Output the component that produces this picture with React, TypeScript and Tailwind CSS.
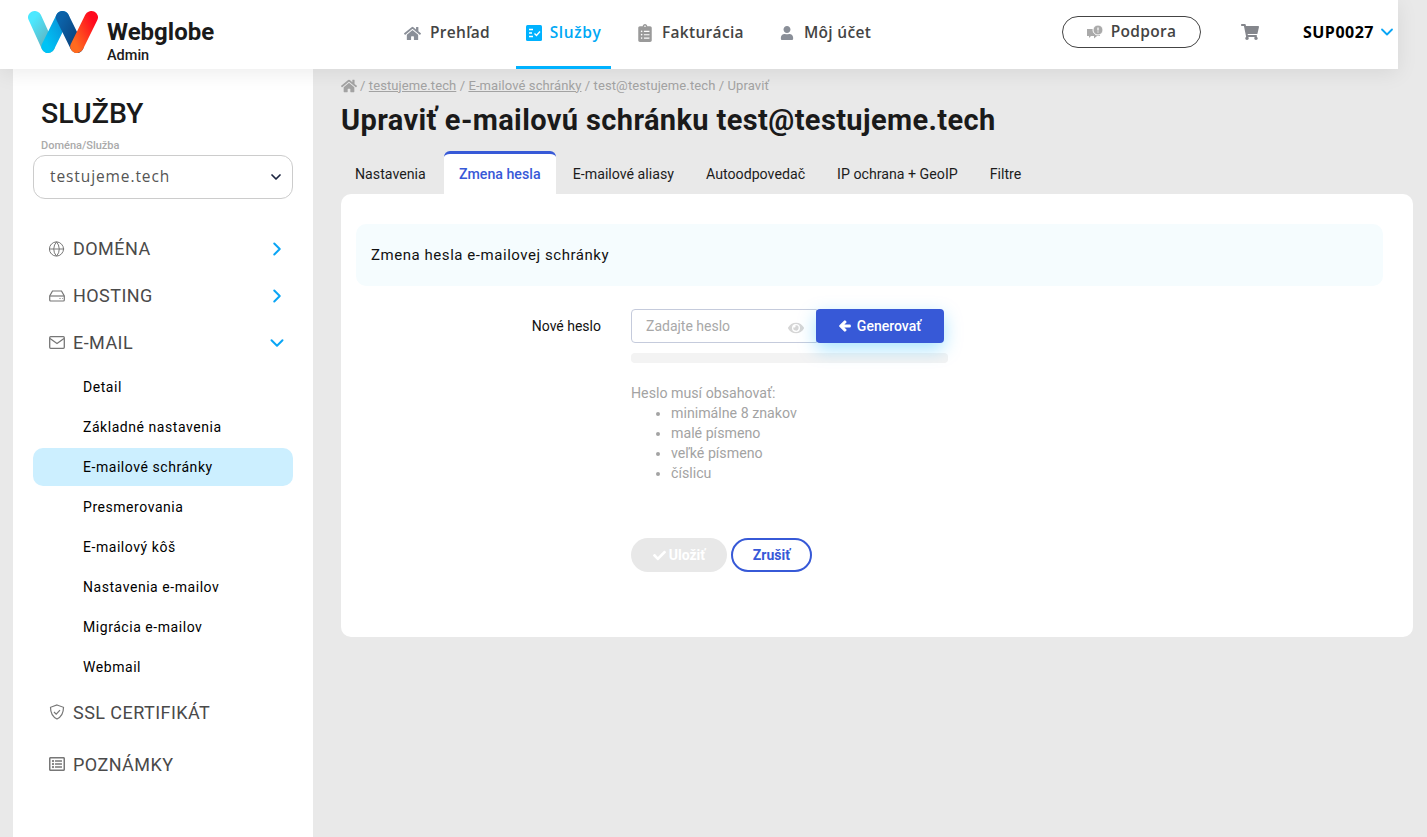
import React from 'react'
import { ChevronDown, ChevronRight, Globe } from 'lucide-react'
import { FaHome, FaShoppingCart, FaUser, FaEye, FaArrowLeft, FaCheck, FaRegListAlt, FaClipboardList } from 'react-icons/fa'

const Logo = () => (
  <svg width="70" height="42" viewBox="2.500 1.500 68 43" preserveAspectRatio="none" className="mb-[5px] shrink-0">
    <defs>
      <linearGradient id="a" x1="0" y1="0" x2="0.6" y2="1">
        <stop offset="0" stopColor="#4ce8ff" />
        <stop offset="1" stopColor="#5fb6c4" />
      </linearGradient>
      <linearGradient id="b" x1="0" y1="1" x2="1" y2="0">
        <stop offset="0" stopColor="#00c3f5" />
        <stop offset="1" stopColor="#0a8fd8" />
      </linearGradient>
      <linearGradient id="c" x1="0" y1="0" x2="1" y2="1">
        <stop offset="0" stopColor="#0b62a8" />
        <stop offset="1" stopColor="#0b3f78" />
      </linearGradient>
      <linearGradient id="d" x1="0" y1="1" x2="1" y2="0">
        <stop offset="0" stopColor="#ff6a1f" />
        <stop offset="1" stopColor="#ff0a1e" />
      </linearGradient>
    </defs>
    <path d="M9 8 L22 38" stroke="url(#a)" strokeWidth="13" strokeLinecap="round" />
    <path d="M22 38 L36 8" stroke="url(#b)" strokeWidth="13" strokeLinecap="round" />
    <path d="M36 8 L50 38" stroke="url(#c)" strokeWidth="13" strokeLinecap="round" />
    <path d="M50 38 L64 8" stroke="url(#d)" strokeWidth="13" strokeLinecap="round" />
  </svg>
)

const ServicesIcon = () => (
  <svg width="16" height="16" viewBox="0 0 16 16">
    <rect width="16" height="16" rx="1.5" fill="#00b2ff" />
    <path d="M3 4.5h4M3 8h3M3 11.5h4" stroke="#fff" strokeWidth="1.3" />
    <path d="M8.5 8.5l2 2 3.5-4" stroke="#fff" strokeWidth="1.4" fill="none" />
  </svg>
)

const SupportIcon = () => (
  <svg width="16" height="15" viewBox="0 0 16 15">
    <path d="M0 4h8v7H4l-2 2v-2H0z" fill="#aaa" />
    <path d="M5 8h8v3h-3l-3 2.500V11H5z" fill="#aaa" />
    <circle cx="11" cy="5" r="5" fill="#aaa" stroke="#fff" strokeWidth="1" />
    <path d="M11 2.500v3M11 6.600v1" stroke="#fff" strokeWidth="1.2" />
  </svg>
)

const DiskIcon = () => (
  <svg width="16" height="12" viewBox="0 0 16 12" fill="none" stroke="#777" strokeWidth="1.2">
    <path d="M3.500 1h9L15.300 6v4a1 1 0 0 1-1 1H1.700a1 1 0 0 1-1-1V6z" />
    <path d="M1 6h14" />
    <path d="M10.500 8.500h1M13 8.500h.6" />
  </svg>
)

const ShieldIcon = () => (
  <svg width="16" height="16" viewBox="0 0 16 16" fill="none" stroke="#777" strokeWidth="1.2">
    <path d="M8 1l6.500 2.300c0 5-1.600 9.400-6.500 11.700C3.100 12.700 1.500 8.300 1.500 3.300z" />
    <path d="M5 8l2.200 2.200L11 6.200" />
  </svg>
)

const MailIcon = () => (
  <svg width="16" height="13" viewBox="0 0 16 13" fill="none" stroke="#777" strokeWidth="1.300">
    <rect x="0.700" y="0.700" width="14.600" height="11.600" rx="1" />
    <path d="M1 2.500l7 5 7-5" />
  </svg>
)

const subItems = ['Detail', 'Základné nastavenia', 'E-mailové schránky', 'Presmerovania', 'E-mailový kôš', 'Nastavenia e-mailov', 'Migrácia e-mailov', 'Webmail']
const rules = ['minimálne 8 znakov', 'malé písmeno', 'veľké písmeno', 'číslicu']

const MenuRow = ({ icon, label, open }: { icon: React.ReactNode; label: string; open?: boolean }) => (
  <div className="flex h-[47px] items-center pl-[15px] pr-[5px]">
    <span className="flex w-[17px] justify-center">{icon}</span>
    <span className="ml-2 text-[18px] tracking-[0.45px] text-[#4a4a4a]">{label}</span>
    {open
      ? <ChevronDown size={22} strokeWidth={2.200} className="ml-auto text-[#0aa5f5]" />
      : <ChevronRight size={22} strokeWidth={2.200} className="ml-auto text-[#0aa5f5]" />}
  </div>
)

export default function App() {
  return (
    <div className="min-h-[837px] bg-[#e9e9e9] font-['Roboto',sans-serif] text-[#1c1c1c]">
      <header className="relative z-10 flex h-[69px] w-[1398px] items-center bg-white shadow-[0_4px_20px_rgba(0,0,0,0.08)]">
        <div className="ml-[28px] flex w-[329px] items-center">
          <Logo />
          <div className="ml-[9px] pt-[14px]">
            <div className="text-[24px] font-bold leading-[27px] text-[#1a1a1a]">Webglobe</div>
            <div className="mt-[1px] text-[14.500px] font-medium leading-[17px]">Admin</div>
          </div>
        </div>
        <nav className="ml-[48px] flex h-full font-['Open_Sans',sans-serif] text-[15.500px] font-semibold tracking-[0.3px] text-[#444]">
          <div className="flex w-[111px] items-center gap-[9px] pb-[3px]">
            <FaHome size={17} className="ml-[-1px] text-[#8a8f98]" />Prehľad
          </div>
          <div className="flex h-full w-[95px] items-center justify-center gap-[8px] border-b-[3px] border-[#00b2ff] tracking-[0.6px] text-[#00a8f5]">
            <ServicesIcon />Služby
          </div>
          <div className="ml-[25px] flex w-[144px] items-center gap-[8px] pb-[3px]">
            <FaClipboardList size={18} className="text-[#9a9a9a]" />Fakturácia
          </div>
          <div className="flex items-center gap-[10px] pb-[3px]">
            <FaUser size={14} className="text-[#8a8f98]" />Môj účet
          </div>
        </nav>
        <div className="ml-auto flex items-center pb-[5px] font-['Open_Sans',sans-serif]">
          <button className="flex h-[32px] w-[139px] items-center justify-center gap-[8px] rounded-full border border-[#444] text-[15.500px] font-semibold tracking-[0.3px] text-[#444]">
            <SupportIcon />Podpora
          </button>
          <FaShoppingCart size={18} className="ml-[40px] text-[#84868c]" />
          <span className="ml-[44px] text-[16px] font-bold tracking-[0.5px] text-black">SUP0027</span>
          <ChevronDown size={20} strokeWidth={2.200} className="ml-[3px] mr-[1px] text-[#0aa5f5]" />
        </div>
      </header>

      <div className="flex">
        <aside className="ml-[13px] h-[768px] w-[300px] bg-white px-[20px] pt-[27px]">
          <h2 className="ml-[8px] text-[28.500px] font-medium leading-[36px] text-[#1a1a1a]">SLUŽBY</h2>
          <div className="ml-[8px] mt-[7px] text-[11px] font-medium leading-[14px] text-[#aaa]">Doména/Služba</div>
          <div className="mt-[2px] flex h-[44px] items-center justify-between rounded-[12px] border border-[#ccc] pl-[16px] pr-[8px] font-['Open_Sans',sans-serif] text-[15.500px] tracking-[0.9px] text-[#555]">
            testujeme.tech
            <ChevronDown size={16} strokeWidth={2.600} className="text-[#1c2540]" />
          </div>
          <div className="mt-[26px]">
            <MenuRow icon={<Globe size={18} strokeWidth={1.400} className="text-[#777]" />} label="DOMÉNA" />
            <MenuRow icon={<DiskIcon />} label="HOSTING" />
            <MenuRow icon={<MailIcon />} label="E-MAIL" open />
          </div>
          <ul className="mt-[2px] text-[14px] tracking-[0.55px] text-black">
            {subItems.map((item) => (
              <li key={item} className={`mb-[2px] flex h-[38px] items-center rounded-[10px] pl-[50px] ${item === 'E-mailové schránky' ? 'bg-[#ccefff]' : ''}`}>{item}</li>
            ))}
          </ul>
          <div className="mt-[-2px] flex h-[52px] items-center pl-[15px]">
            <span className="flex w-[17px] justify-center"><ShieldIcon /></span>
            <span className="ml-2 text-[18px] tracking-[0.45px] text-[#4a4a4a]">SSL CERTIFIKÁT</span>
          </div>
          <div className="flex h-[52px] items-center pl-[15px]">
            <span className="flex w-[17px] justify-center"><FaRegListAlt size={16} className="text-[#777]" /></span>
            <span className="ml-2 text-[18px] tracking-[0.45px] text-[#4a4a4a]">POZNÁMKY</span>
          </div>
        </aside>

        <main className="ml-[28px] w-[1072px]">
          <div className="flex h-[32px] items-center pt-[1px] text-[13px] tracking-[0.1px] text-[#a3a3a3]">
            <FaHome size={16} className="mr-[3px]" />
            <span>/&nbsp;<u>testujeme.tech</u>&nbsp;/&nbsp;<u>E-mailové schránky</u>&nbsp;/ test@testujeme.tech / Upraviť</span>
          </div>
          <h1 className="mt-[1px] text-[29px] font-bold leading-[36px] tracking-[0.38px] text-[#1a1a1a]">Upraviť e-mailovú schránku test@testujeme.tech</h1>
          <div className="ml-[-2px] mt-[13px] flex h-[43px] text-[14.200px] text-[#1c1c1c]">
            <div className="flex items-center px-[16px] pt-[5px]">Nastavenia</div>
            <div className="z-[1] ml-[2px] flex h-[44px] w-[112px] items-center justify-center rounded-t-[6px] border-t-[3px] border-[#3759d7] bg-white pt-[1px] font-medium text-[#3759d7]">Zmena hesla</div>
            <div className="ml-[1px] flex items-center px-[16px] pt-[5px]">E-mailové aliasy</div>
            <div className="flex items-center px-[16px] pt-[5px]">Autoodpovedač</div>
            <div className="flex items-center px-[16px] pt-[5px]">IP ochrana + GeoIP</div>
            <div className="flex items-center px-[16px] pt-[5px]">Filtre</div>
          </div>
          <section className="h-[443px] rounded-[10px] bg-white pl-[15px] pr-[30px] pt-[30px]">
            <div className="flex h-[62px] items-center rounded-[10px] bg-[#f5fcfe] pl-[15px] text-[15px] tracking-[0.55px] text-[#111]">Zmena hesla e-mailovej schránky</div>
            <div className="mt-[23px] flex">
              <label className="w-[245px] pt-[7px] text-right text-[14px] text-[#111]">Nové heslo</label>
              <div className="ml-[30px]">
                <div className="flex w-[317px]">
                  <div className="flex h-[34px] w-[186px] items-center justify-between rounded-l-[4px] border border-[#c5cbdc] pl-[14px] pr-[12px] text-[14px] text-[#a8a8a8]">
                    Zadajte heslo
                    <FaEye size={16} className="mt-[3px] text-[#d6d6d6]" />
                  </div>
                  <button className="z-[1] ml-[-1px] flex h-[34px] w-[128px] items-center justify-center gap-[6px] rounded-[4px] bg-[#3759d7] text-[14px] font-medium text-white shadow-[0_6px_18px_rgba(0,178,255,0.35)]">
                    <FaArrowLeft size={12} stroke="currentColor" strokeWidth={50} />Generovať
                  </button>
                </div>
                <div className="mt-[10px] h-[10px] w-[317px] rounded-[4px] bg-[#f3f3f3]" />
                <div className="mt-[20px] text-[14.200px] leading-[20px] text-[#a3a3a3]">
                  Heslo musí obsahovať:
                  <ul className="list-disc pl-[40px]">
                    {rules.map((rule) => <li key={rule}>{rule}</li>)}
                  </ul>
                </div>
                <div className="mt-[55px] flex gap-[4px]">
                  <button className="flex h-[34px] w-[96px] items-center justify-center gap-[3px] rounded-full bg-[#e8e8e8] text-[14px] font-bold text-white">
                    <FaCheck size={13} />Uložiť
                  </button>
                  <button className="h-[34px] w-[81px] rounded-full border-2 border-[#3759d7] text-[14px] font-bold text-[#3759d7]">Zrušiť</button>
                </div>
              </div>
            </div>
          </section>
        </main>
      </div>
    </div>
  )
}
